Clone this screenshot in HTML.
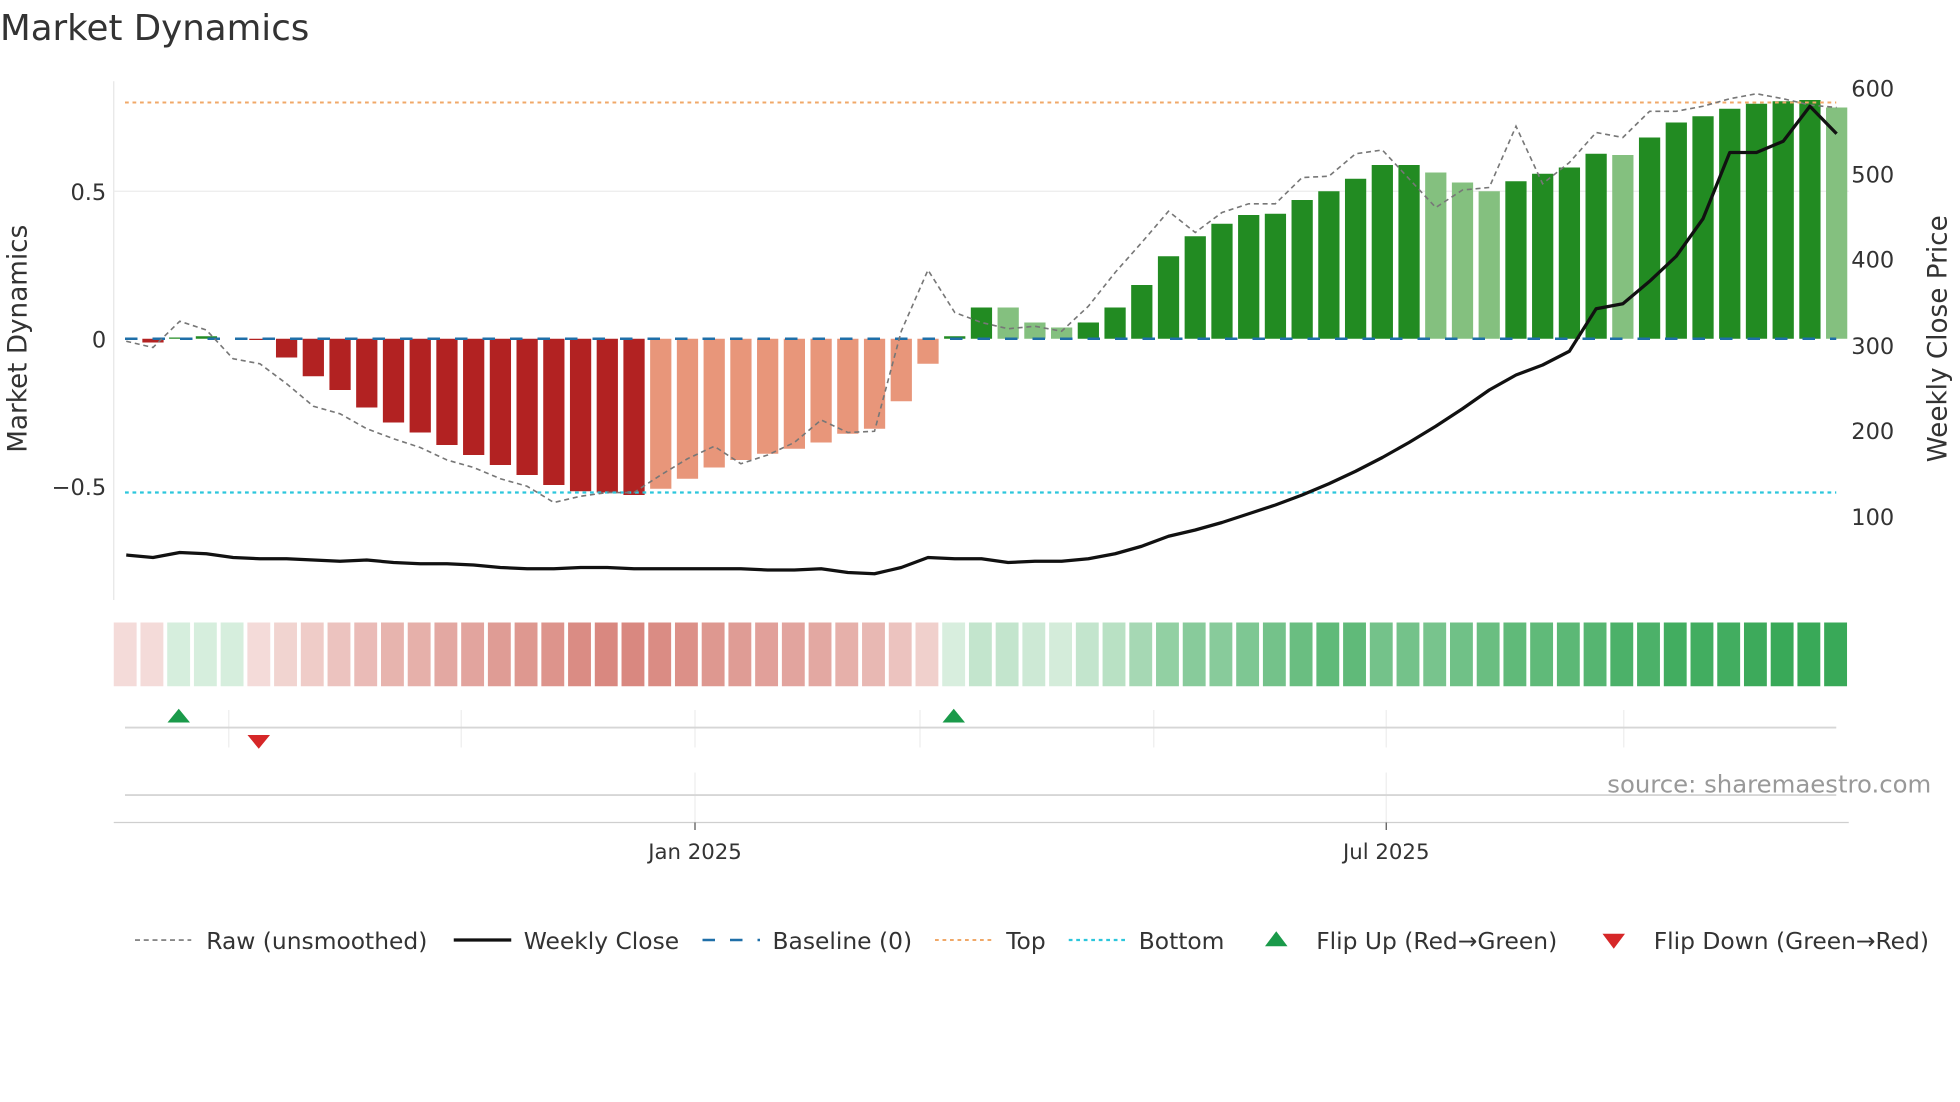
<!DOCTYPE html>
<html><head><meta charset="utf-8"><style>
html,body{margin:0;padding:0;background:#fff;overflow:hidden}
svg{display:block}
text{font-family:"DejaVu Sans","Liberation Sans",sans-serif;fill:#333}
</style></head><body>
<svg id="s" width="1960" height="1102" viewBox="0 0 1568 881.6" xmlns="http://www.w3.org/2000/svg">
<text x="0" y="32" font-size="28.5">Market Dynamics</text>
<line x1="91" y1="65" x2="91" y2="480" stroke="#e6e6e6" stroke-width="1"/>
<line x1="91" y1="153" x2="1479" y2="153" stroke="#ececec" stroke-width="1"/>
<g id="bars"></g>
<line x1="100" y1="82" x2="1469" y2="82" stroke="#f0a868" stroke-width="1.6" stroke-dasharray="3,3"/>
<line x1="100" y1="394" x2="1469" y2="394" stroke="#2cc6dc" stroke-width="1.8" stroke-dasharray="3,3"/>
<line x1="100" y1="271" x2="1469" y2="271" stroke="#1f6fa8" stroke-width="2" stroke-dasharray="10,12"/>
<polyline id="raw" fill="none" stroke="#777" stroke-width="1.3" stroke-dasharray="4,3"/>
<polyline id="close" fill="none" stroke="#111" stroke-width="2.6" stroke-linejoin="round"/>
<g font-size="18" text-anchor="end">
<text x="85" y="160">0.5</text><text x="85" y="278">0</text><text x="85" y="396">−0.5</text>
</g>
<g font-size="18">
<text x="1481" y="77">600</text><text x="1481" y="146">500</text><text x="1481" y="214">400</text><text x="1481" y="283">300</text><text x="1481" y="351">200</text><text x="1481" y="420">100</text>
</g>
<text font-size="21" transform="translate(21,271) rotate(-90)" text-anchor="middle">Market Dynamics</text>
<text font-size="21" transform="translate(1557,271) rotate(-90)" text-anchor="middle">Weekly Close Price</text>
<g id="strip"></g>
<g stroke="#eeeeee" stroke-width="1">
<line x1="183" y1="568" x2="183" y2="598"/><line x1="369" y1="568" x2="369" y2="598"/><line x1="556" y1="568" x2="556" y2="598"/><line x1="736" y1="568" x2="736" y2="598"/><line x1="923" y1="568" x2="923" y2="598"/><line x1="1109" y1="568" x2="1109" y2="598"/><line x1="1299" y1="568" x2="1299" y2="598"/>
<line x1="556" y1="618" x2="556" y2="658"/><line x1="1109" y1="618" x2="1109" y2="658"/>
</g>
<line x1="100" y1="582" x2="1469" y2="582" stroke="#d6d6d6" stroke-width="1.5"/>
<line x1="100" y1="636" x2="1469" y2="636" stroke="#d6d6d6" stroke-width="1.5"/>
<line x1="91" y1="658" x2="1479" y2="658" stroke="#cfcfcf" stroke-width="1"/>
<line x1="556" y1="658" x2="556" y2="664" stroke="#555"/><line x1="1109" y1="658" x2="1109" y2="664" stroke="#555"/>
<polygon points="134,578 152,578 143,567" fill="#1a9a4a"/>
<polygon points="754,578 772,578 763,567" fill="#1a9a4a"/>
<polygon points="198,588 216,588 207,599" fill="#d62728"/>
<text x="1545" y="634" font-size="19.5" text-anchor="end" style="fill:#999">source: sharemaestro.com</text>
<g font-size="17" text-anchor="middle"><text x="556" y="687">Jan 2025</text><text x="1109" y="687">Jul 2025</text></g>
<g font-size="18.7">
<line x1="108" y1="752" x2="153" y2="752" stroke="#777" stroke-width="1.3" stroke-dasharray="4,3"/><text x="165" y="759">Raw (unsmoothed)</text>
<line x1="363" y1="752" x2="409" y2="752" stroke="#111" stroke-width="2.6"/><text x="419" y="759">Weekly Close</text>
<line x1="562" y1="752" x2="608" y2="752" stroke="#1f6fa8" stroke-width="2" stroke-dasharray="10,12"/><text x="618" y="759">Baseline (0)</text>
<line x1="748" y1="752" x2="794" y2="752" stroke="#f0a868" stroke-width="1.6" stroke-dasharray="3,3"/><text x="805" y="759">Top</text>
<line x1="855" y1="752" x2="900" y2="752" stroke="#2cc6dc" stroke-width="1.8" stroke-dasharray="3,3"/><text x="911" y="759">Bottom</text>
<polygon points="1012,757 1030,757 1021,745" fill="#1a9a4a"/><text x="1053" y="759">Flip Up (Red→Green)</text>
<polygon points="1282,747 1300,747 1291,759" fill="#d62728"/><text x="1323" y="759">Flip Down (Green→Red)</text>
</g>
</svg>
<script>
var ns="http://www.w3.org/2000/svg";
function el(t,a,p){var e=document.createElementNS(ns,t);for(var k in a)e.setAttribute(k,a[k]);p.appendChild(e);return e;}
var SP=21.38;
var tops=[271,274,270,269,271,272,286,301,312,326,338,346,356,364,372,380,388,393,394,396,391,383,374,368,363,359,354,347,343,321,291,269,246,246,258,262,258,246,228,205,189,179,172,171,160,153,143,132,132,138,146,153,145,139,134,123,124,110,98,93,87,83,81,80,86];
var light={33:1,34:1,35:1,49:1,50:1,51:1,56:1,64:1};
var bars=document.getElementById('bars');
for(var i=0;i<65;i++){var cx=101+i*SP,t=tops[i],c;
 if(t>271){c=(i>=20&&i<=30)?'#e8967a':'#b22222';el('rect',{x:cx-8.5,y:271,width:17,height:t-271,fill:c},bars);}
 else if(t<271){c=light[i]?'#84c07f':'#228b22';el('rect',{x:cx-8.5,y:t,width:17,height:271-t,fill:c},bars);}
}
var raw=[273,278,257,264,287,291,307,325,331,343,351,358,368,374,383,389,402,397,394,394,380,367,357,371,364,354,336,346,345,265,216,250,258,263,261,265,245,218,194,169,186,170,163,163,142,141,123,120,143,166,152,150,101,147,130,106,110,89,89,85,79,75,79,84,86];
var cl=[444,446,442,443,446,447,447,448,449,448,450,451,451,452,454,455,455,454,454,455,455,455,455,455,456,456,455,458,459,454,446,447,447,450,449,449,447,443,437,429,424,418,411,404,396,387,377,366,354,341,327,312,300,292,281,247,243,225,205,175,122,122,113,85,107];
function pts(a){return a.map(function(y,i){return (101+i*SP).toFixed(1)+','+y}).join(' ');}
document.getElementById('raw').setAttribute('points',pts(raw));
document.getElementById('close').setAttribute('points',pts(cl));
var ga=[.2,.3,.3,.25,.22,.3,.35,.45,.55,.6,.6,.65,.7,.75,.8,.8,.7,.7,.68,.72,.75,.8,.8,.82,.85,.9,.9,.95,.95,.95,.98,1,1,1];
var st=document.getElementById('strip');
for(var i=0;i<65;i++){var x=91+i*SP,fill,op;
 if(i>=2&&i<=4){fill='#34a853';op=.2;}
 else if(i<31){fill='#c0392b';op=[.18,.18,0,0,0,.18,.22,.26,.3,.34,.38,.4,.44,.46,.5,.52,.54,.58,.6,.6,.58,.56,.52,.5,.48,.46,.44,.4,.36,.3,.24][i];}
 else {fill='#2ea44f';op=ga[i-31]*0.95;}
 el('rect',{x:x,y:498,width:18.3,height:51,fill:fill,'fill-opacity':op},st);
}
</script>
</body></html>
